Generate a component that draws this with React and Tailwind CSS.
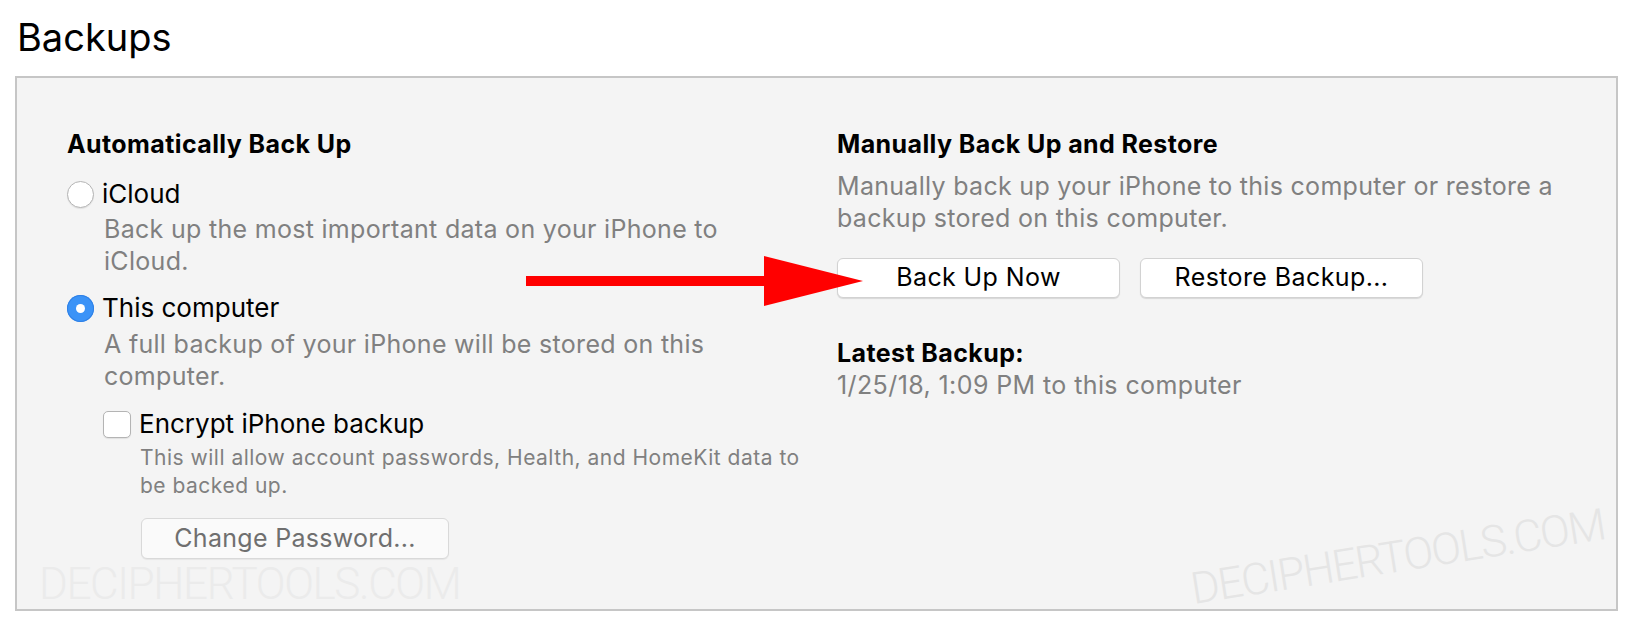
import React from "react";

const Radio = ({ checked }) =>
  checked ? (
    <span className="flex h-[27px] w-[27px] shrink-0 items-center justify-center rounded-full bg-[#3b93f7] shadow-[inset_0_0_0_1px_#2f80e6]">
      <span className="h-[9px] w-[9px] rounded-full bg-white" />
    </span>
  ) : (
    <span className="h-[27px] w-[27px] shrink-0 rounded-full border border-[#b4b4b4] bg-white shadow-[0_1px_1px_rgba(0,0,0,0.08)]" />
  );

const MacButton = ({ children, className = "" }) => (
  <button
    className={`flex h-[40px] w-[283px] items-center justify-center rounded-[6px] border border-[#d2d2d2] bg-white text-[25px] tracking-[0.4px] text-black shadow-[0_1px_1px_rgba(0,0,0,0.12)] ${className}`}
  >
    {children}
  </button>
);

export default function App() {
  return (
    <div className="min-h-[642px] bg-white px-[15px] pt-[13px] [font-family:Inter,'Liberation_Sans',sans-serif]">
      <h1 className="ml-[2px] text-[38px] leading-[48px] font-normal text-black">Backups</h1>

      <div className="relative mt-[15px] w-[1603px] h-[535px] border-2 border-[#c6c6c6] bg-[#f4f4f4] pt-[50px] pl-[50px]">
        {/* watermarks */}
        <div className="pointer-events-none absolute left-[22px] top-[482px] text-[44px] leading-[48px] font-light tracking-[-1.4px] text-[#ebebeb] whitespace-nowrap [font-family:Roboto,sans-serif]">
          DECIPHERTOOLS.COM
        </div>
        <div className="pointer-events-none absolute left-[1178px] top-[487px] origin-bottom-left -rotate-[9deg] text-[44px] leading-[48px] font-light tracking-[-1.6px] text-[#e5e5e5] whitespace-nowrap [font-family:Roboto,sans-serif]">
          DECIPHERTOOLS.COM
        </div>

        <div className="relative flex">
          {/* left column */}
          <div className="w-[770px]">
            <h2 className="text-[25px] leading-[32px] font-bold tracking-[0.4px] text-black">Automatically Back Up</h2>

            <div className="mt-[18px] flex items-center gap-[8px]">
              <Radio />
              <span className="text-[26px] leading-[32px] text-black">iCloud</span>
            </div>
            <p className="mt-[3px] ml-[37px] text-[25px] leading-[32px] tracking-[0.3px] text-[#808080]">
              Back up the most important data on your iPhone to
              <br />
              iCloud.
            </p>

            <div className="mt-[15px] flex items-center gap-[8px]">
              <Radio checked />
              <span className="text-[26px] leading-[32px] text-black">This computer</span>
            </div>
            <p className="mt-[4px] ml-[37px] text-[25px] leading-[32px] tracking-[0.3px] text-[#808080]">
              A full backup of your iPhone will be stored on this
              <br />
              computer.
            </p>

            <div className="ml-[36px]">
              <div className="mt-[16px] flex items-center gap-[8px]">
                <span className="h-[27px] w-[28px] shrink-0 rounded-[5px] border border-[#b4b4b4] bg-white shadow-[0_1px_1px_rgba(0,0,0,0.08)]" />
                <span className="text-[26px] leading-[32px] text-black">Encrypt iPhone backup</span>
              </div>
              <p className="mt-[4px] ml-[37px] text-[21px] leading-[28px] tracking-[0.5px] text-[#808080]">
                This will allow account passwords, Health, and HomeKit data to
                <br />
                be backed up.
              </p>
              <button className="mt-[18px] ml-[38px] flex h-[41px] w-[308px] items-center justify-center rounded-[6px] border border-[#d9d9d9] bg-[#fafafa] text-[25px] tracking-[0.3px] text-[#6f6f6f] shadow-[0_1px_1px_rgba(0,0,0,0.06)]">
                Change Password...
              </button>
            </div>
          </div>

          {/* right column */}
          <div className="flex-1">
            <h2 className="text-[25px] leading-[32px] font-bold tracking-[0.4px] text-black">Manually Back Up and Restore</h2>
            <p className="mt-[10px] text-[25px] leading-[32px] tracking-[0.3px] text-[#808080]">
              Manually back up your iPhone to this computer or restore a
              <br />
              backup stored on this computer.
            </p>
            <div className="mt-[24px] flex gap-[20px]">
              <MacButton>Back Up Now</MacButton>
              <MacButton>Restore Backup...</MacButton>
            </div>
            <h2 className="mt-[39px] text-[25px] leading-[32px] font-bold tracking-[0.4px] text-black">Latest Backup:</h2>
            <p className="text-[25px] leading-[32px] tracking-[0.4px] text-[#808080]">1/25/18, 1:09 PM to this computer</p>
          </div>
        </div>

        {/* annotation arrow */}
        <svg className="absolute left-[509px] top-[178px]" width="337" height="50" viewBox="0 0 337 50">
          <rect x="0" y="20" width="242" height="10" fill="#ff0000" />
          <polygon points="238,0 337,25 238,50" fill="#ff0000" />
        </svg>
      </div>
    </div>
  );
}
